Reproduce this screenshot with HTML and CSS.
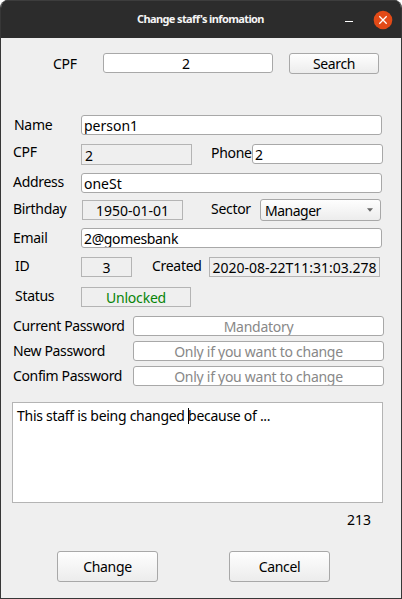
FILE: index.html
```html
<!DOCTYPE html>
<html lang="en">
<head>
<meta charset="utf-8">
<title>Change staff's infomation</title>
<link rel="stylesheet" href="styles.css">
</head>
<body>
<main class="window">
  <header class="titlebar">
    <h1 class="title">Change staff's infomation</h1>
    <svg class="minimize" width="8" height="2" viewBox="0 0 8 2"><path d="M0 .5H8" stroke="#fff"/></svg>
    <svg class="close" width="20" height="20" viewBox="0 0 20 20"><circle cx="10" cy="10" r="9.3" fill="#e24a17"/><path d="M6.3 6.3l7.4 7.4M13.7 6.3l-7.4 7.4" stroke="#fff" stroke-width="1.3"/></svg>
  </header>
  <form class="content">
    <div class="row row-search">
      <label class="label">CPF</label>
      <input class="field centered" value="2">
      <button class="button" type="button">Search</button>
    </div>
    <div class="row row-name">
      <label class="label nudge">Name</label>
      <input class="field wide tight" value="person1">
    </div>
    <div class="row row-cpf">
      <label class="label raised">CPF</label>
      <output class="box">2</output>
      <label class="label second phone">Phone</label>
      <input class="field" value="2">
    </div>
    <div class="row row-address">
      <label class="label address">Address</label>
      <input class="field wide" value="oneSt">
    </div>
    <div class="row row-birthday">
      <label class="label">Birthday</label>
      <output class="box centered">1950-01-01</output>
      <label class="label second">Sector</label>
      <div class="combo"><span>Manager</span><svg width="6" height="4" viewBox="0 0 6 4"><path d="M0 .3H6L3 3.7z" fill="#666"/></svg></div>
    </div>
    <div class="row row-email">
      <label class="label">Email</label>
      <input class="field wide email" value="2@gomesbank">
    </div>
    <div class="row row-id">
      <label class="label indent">ID</label>
      <output class="box centered id">3</output>
      <label class="label second">Created</label>
      <output class="box centered created">2020-08-22T11:31:03.278</output>
    </div>
    <div class="row row-status">
      <label class="label indent">Status</label>
      <output class="box centered unlocked">Unlocked</output>
    </div>
    <div class="row row-current">
      <label class="label password current">Current Password</label>
      <input class="field centered secret" placeholder="Mandatory">
    </div>
    <div class="row row-new">
      <label class="label password">New Password</label>
      <input class="field centered secret" placeholder="Only if you want to change">
    </div>
    <div class="row row-new">
      <label class="label password confirm">Confim Password</label>
      <input class="field centered secret" placeholder="Only if you want to change">
    </div>
    <div class="notes">This staff is being changed <i class="caret"></i>because of ...</div>
    <div class="counter">213</div>
    <div class="actions">
      <button class="button" type="button">Change</button>
      <button class="button" type="button">Cancel</button>
    </div>
  </form>
</main>
</body>
</html>
```
FILE: styles.css
```css
* { box-sizing: border-box; }
body { margin: 0; background: #fff; }
.window {
  width: 402px;
  height: 599px;
  overflow: hidden;
  border: 1px solid #373737;
  border-top: 0;
  border-radius: 8px 8px 0 0;
  background: #efefef;
  color: #000;
  font: 14px/20px "Noto Sans", sans-serif;
}
.titlebar {
  display: grid;
  grid-template-columns: 137px 1fr 28px 20px;
  align-items: center;
  height: 38px;
  padding: 0 8px 1px 0;
  background: #2c2c2c;
  border-top: 1px solid #3d3d3d;
}
.title {
  grid-column: 2;
  margin: 0 0 0 -1px;
  color: #f5f5f5;
  font-size: 11px;
  font-weight: 700;
  letter-spacing: -.62px;
  white-space: nowrap;
}
.minimize { margin-top: 6px; }
.close { display: block; margin-top: 1px; }
.content { margin: 0; }
.row { display: flex; align-items: flex-start; height: 20px; }
.label {
  width: 69px;
  margin: -1px 0 0 -1px;
  letter-spacing: -.3px;
  white-space: nowrap;
}
.field, .box, .combo, .button, .notes {
  border: 1px solid #a8a8a8;
  font: inherit;
  color: #000;
}
.field {
  min-width: 0;
  height: 20px;
  padding: 1px 2px 0;
  border-radius: 3px;
  background: #fff;
  outline: 0;
}
.field::placeholder { color: #888; opacity: 1; }
.wide { width: 301px; }
.email { letter-spacing: -.36px; }
.box {
  height: 20px;
  padding-left: 3px;
  border-color: #b4b4b4;
  line-height: 20px;
  white-space: nowrap;
}
.centered { text-align: center; }
.box.centered { padding: 0; }
.button {
  padding: 0;
  border-radius: 3px;
  background: linear-gradient(#fefefe, #ececec);
  letter-spacing: -.35px;
}
.row-search { margin-top: 15px; padding-left: 52px; }
.row-search .label { width: 50px; margin-top: 1px; }
.row-search .field { width: 170px; padding-right: 6px; }
.row-search .button { width: 90px; height: 21px; margin-left: 16px; line-height: 19px; }
.row:not(.row-search) { padding-left: 12px; }
.row-name { margin-top: 42px; }
.row .label:first-child:not(.password) { margin-left: 0; }
.row:not(.row-search) .label:first-child:not(.password) { width: 68px; }
.label.nudge { margin-top: 0; padding-left: 1px; }
.row-cpf { height: 21px; margin-top: 9px; }
.raised { margin-top: -2px; }
.row-cpf .box { width: 111px; height: 21px; line-height: 21px; }
.row-cpf .field { width: 131px; }
.second { width: 49px; margin-left: 28px; }
.phone { width: 41px; margin-left: 19px; }
.row-address { margin-top: 8px; }
.row-birthday { margin-top: 6px; height: 22px; }
.row-birthday .label { margin-top: 0; }
.row-birthday .box { width: 101px; margin: 1px 0 0 1px; }
.combo {
  display: flex;
  align-items: center;
  justify-content: space-between;
  width: 121px;
  height: 22px;
  padding: 2px 7px 0 4px;
  border-radius: 3px;
  background: linear-gradient(#fefefe, #ececec);
  letter-spacing: -.5px;
}
.combo svg { margin-top: -3px; }
.row-email { margin-top: 7px; }
.row-email .label { margin-top: 0; }
.row-id { margin-top: 9px; }
.indent { padding-left: 2px; }
.id { width: 51px; }
.row-id .second { width: 57px; margin-left: 20px; }
.created { width: 171px; }
.row-status { margin-top: 10px; }
.row-status .box { width: 110px; }
.box.unlocked { color: #078407; letter-spacing: -.2px; }
.row-current { margin-top: 9px; }
.row-new { margin-top: 5px; }
.label.password { width: 120px; margin: 0; letter-spacing: -.36px; }
.secret { width: 251px; letter-spacing: -.27px; }
.notes {
  width: 371px;
  height: 101px;
  margin: 16px 0 0 11px;
  padding: 3px 4px;
  border-color: #b4b4b4;
  background: #fff;
  letter-spacing: -.28px;
}
.caret {
  display: inline-block;
  width: 1px;
  height: 16px;
  margin-right: -1px;
  background: #000;
  vertical-align: -3px;
}
.counter { margin: 7px 30px 0 0; text-align: right; }
.actions { display: flex; gap: 71px; margin: 21px 0 0 56px; }
.actions .button { width: 101px; height: 31px; }
```
